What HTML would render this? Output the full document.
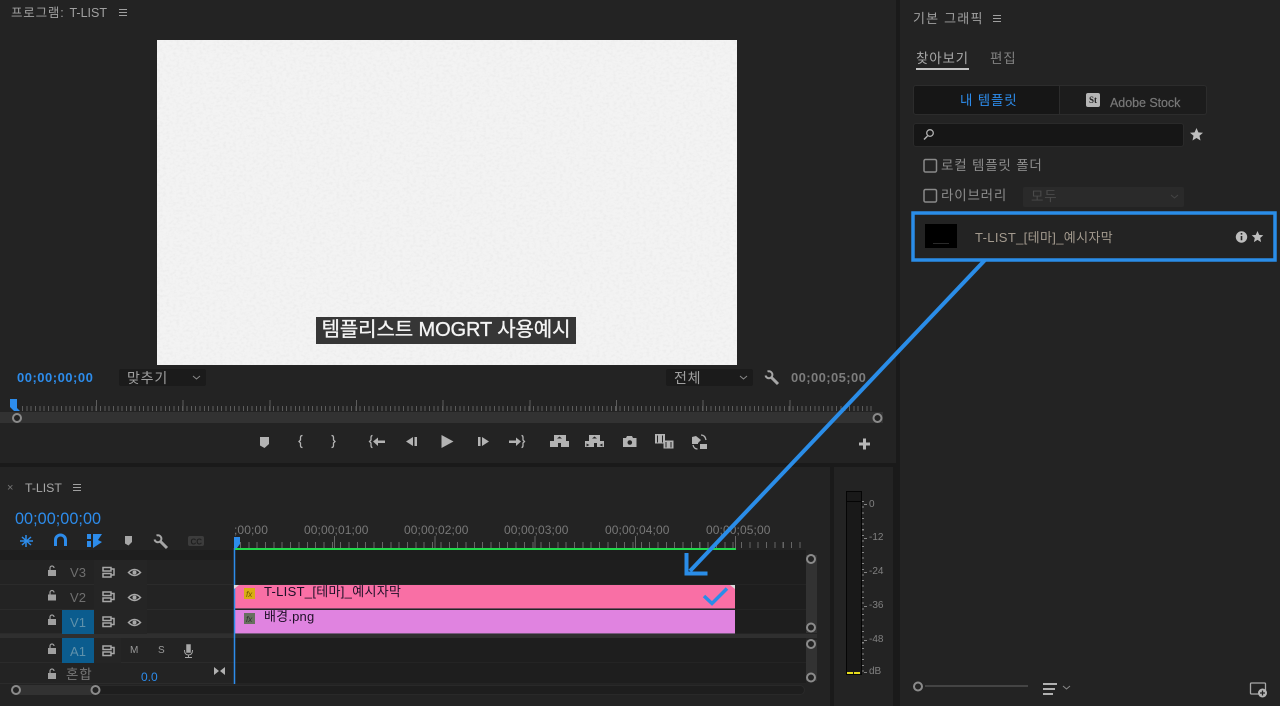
<!DOCTYPE html>
<html lang="ko"><head><meta charset="utf-8"><title>T-LIST</title>
<style>
*{box-sizing:border-box;margin:0;padding:0}
html,body{width:1280px;height:706px;overflow:hidden;background:#1a1a1a}
body{position:relative;font-family:"Liberation Sans","Noto Sans CJK KR",sans-serif;color:#a3a3a3;font-size:12px}
div{position:absolute}
.t{white-space:nowrap;line-height:16px}
.b{color:#2d8ceb}
.ko{letter-spacing:.8px;font-weight:400}
.tc{font-size:12px;color:#787878;letter-spacing:.1px}
.row{left:0;width:806px;border-bottom:1px solid #2b2b2b;background:#232323}
.lab{width:32px;text-align:center;color:#6f6f6f;font-size:13px;line-height:24px}
svg{position:absolute;left:0;top:0}
</style></head><body>
<div style="left:0;top:0;width:896px;height:463px;background:#232323"></div>
<div style="left:0;top:467px;width:830px;height:239px;background:#232323"></div>
<div style="left:834px;top:467px;width:59px;height:239px;background:#232323"></div>
<div style="left:900px;top:0;width:380px;height:706px;background:#232323"></div>

<!-- program monitor -->
<div class="t ko" style="left:11px;top:5px;font-size:12.500px;color:#a0a0a0">프로그램:<span style="letter-spacing:0;margin-left:5px">T-LIST</span></div>
<div style="left:157px;top:40px;width:580px;height:325px;background:#f3f3f3"></div>
<svg width="1280" height="706" style="left:0;top:0"><defs><filter id="p" x="0" y="0" width="100%" height="100%"><feTurbulence type="fractalNoise" baseFrequency=".3 .4" numOctaves="3" seed="4"/><feColorMatrix values="0 0 0 0 .5 0 0 0 0 .5 0 0 0 0 .5 .7 0 0 0 -.3"/></filter></defs><rect x="157" y="40" width="580" height="325" filter="url(#p)" opacity=".42"/></svg>
<div class="t" style="left:316px;top:317px;width:260px;height:27px;background:#363636;color:#f4f4f4;font-size:20px;line-height:26px;text-align:center;white-space:nowrap;letter-spacing:-.1px;-webkit-text-stroke:.35px #f4f4f4">템플리스트 MOGRT 사용예시</div>
<div class="t b" style="left:17px;top:370px;font-size:13px;font-weight:700;letter-spacing:.5px">00;00;00;00</div>
<div style="left:119px;top:369px;width:87px;height:17px;background:#1b1b1b;border-radius:2px"></div>
<div class="t ko" style="left:127px;top:370px;font-size:14px;color:#a0a0a0">맞추기</div>
<div style="left:666px;top:369px;width:87px;height:17px;background:#1b1b1b;border-radius:2px"></div>
<div class="t ko" style="left:674px;top:370px;font-size:14px;color:#a0a0a0">전체</div>
<div class="t" style="left:791px;top:370px;font-size:13px;font-weight:700;color:#7d7d7d;letter-spacing:.4px">00;00;05;00</div>
<div style="left:0;top:412px;width:883px;height:11px;background:#323232"></div>
<div style="left:22px;top:406px;width:850px;height:5px;background:repeating-linear-gradient(90deg,#5c5c5c 0 1px,transparent 1px 4.330px)"></div>
<div style="left:96px;top:400px;width:780px;height:11px;background:repeating-linear-gradient(90deg,#5c5c5c 0 1px,transparent 1px 86.670px)"></div>

<!-- timeline -->
<div class="t" style="left:7px;top:480px;font-size:11px;color:#777">×</div>
<div class="t" style="left:25px;top:480px;font-size:12.300px;color:#a8a8a8">T-LIST</div>
<div class="t b" style="left:15px;top:511px;font-size:16.200px;letter-spacing:.05px">00;00;00;00</div>
<div style="left:0;top:550px;width:233px;height:10px;background:#1e1e1e"></div>
<div style="left:234px;top:550px;width:572px;height:10px;background:#1d1d1d"></div>
<div class="row" style="top:560px;height:25px"></div>
<div class="row" style="top:585px;height:25px"></div>
<div class="row" style="top:610px;height:24px"></div>
<div style="left:0;top:634px;width:817px;height:4px;background:#2f2f2f"></div>
<div class="row" style="top:638px;height:25px"></div>
<div class="row" style="top:663px;height:21px"></div>
<div style="left:234px;top:560px;width:572px;height:124px;background:rgba(20,20,20,.3)"></div>
<div style="left:234px;top:634px;width:583px;height:4px;background:#2f2f2f"></div>
<div style="left:94px;top:560px;width:53px;height:74px;background:#252525"></div>
<div style="left:62px;top:610px;width:32px;height:24px;background:#0b5c8e"></div>
<div style="left:62px;top:638px;width:32px;height:25px;background:#0b5c8e"></div>
<div style="left:94px;top:638px;width:27px;height:25px;background:#252525"></div>
<div class="lab" style="left:62px;top:561px">V3</div>
<div class="lab" style="left:62px;top:586px">V2</div>
<div class="lab" style="left:62px;top:611px;color:#5f91ab">V1</div>
<div class="lab" style="left:62px;top:640px;color:#5f91ab">A1</div>
<div class="t ko" style="left:66px;top:667px;color:#787878;font-size:13.500px">혼합</div>
<div class="t b" style="left:141px;top:669px;font-size:12px">0.0</div>
<div class="t" style="left:130px;top:643px;font-size:10px;color:#9a9a9a">M</div>
<div class="t" style="left:158px;top:643px;font-size:10px;color:#9a9a9a">S</div>

<!-- ruler -->
<div class="t tc" style="left:234px;top:522px">;00;00</div>
<div class="t tc" style="left:304px;top:522px">00;00;01;00</div>
<div class="t tc" style="left:404px;top:522px">00;00;02;00</div>
<div class="t tc" style="left:504px;top:522px">00;00;03;00</div>
<div class="t tc" style="left:605px;top:522px">00;00;04;00</div>
<div class="t tc" style="left:706px;top:522px">00;00;05;00</div>
<div style="left:240px;top:542px;width:565px;height:6px;background:repeating-linear-gradient(90deg,#666 0 1px,transparent 1px 8.350px)"></div>
<div style="left:334px;top:536px;width:420px;height:12px;background:repeating-linear-gradient(90deg,#666 0 1px,transparent 1px 100.300px)"></div>
<div style="left:234px;top:548px;width:502px;height:2px;background:#22d84c"></div>

<!-- clips -->
<div style="left:234px;top:585px;width:501px;height:24px;background:#f96fa5;border-bottom:1px solid #7a4a66"></div>
<div style="left:234px;top:610px;width:501px;height:24px;background:#e083e0;border-bottom:1px solid #7a5a80"></div>
<div class="t" style="left:264px;top:584px;font-size:13px;color:#1f1028;letter-spacing:.3px">T-LIST_[테마]_예시자막</div>
<div class="t" style="left:264px;top:609px;font-size:13px;color:#1f1028;letter-spacing:.2px">배경.png</div>
<div style="left:244px;top:588px;width:11px;height:11px;background:#d9ae14"></div>
<div class="t" style="left:246px;top:587px;font-size:8px;font-style:italic;color:#6d5200">fx</div>
<div style="left:244px;top:613px;width:11px;height:11px;background:#67705f"></div>
<div class="t" style="left:246px;top:612px;font-size:8px;font-style:italic;color:#2d2d2d">fx</div>

<!-- scrollbars -->
<div style="left:806px;top:555px;width:11px;height:78px;background:#323232"></div>
<div style="left:806px;top:640px;width:11px;height:41px;background:#323232"></div>
<div style="left:11px;top:685px;width:85px;height:10px;background:#323232;border-radius:5px"></div>
<div style="left:96px;top:685px;width:709px;height:10px;background:#1e1e1e;border:1px solid #292929;border-radius:5px"></div>

<!-- meter -->
<div style="left:846px;top:491px;width:16px;height:184px;background:#191919;border:1px solid #050505"></div>
<div style="left:847px;top:491px;width:14px;height:11px;border-bottom:1px solid #050505"></div>
<div style="left:847px;top:672px;width:6px;height:1.500px;background:#e6dc1c"></div>
<div style="left:854px;top:672px;width:6px;height:1.500px;background:#e6dc1c"></div>
<div style="left:862px;top:501px;width:2px;height:172px;background:repeating-linear-gradient(180deg,#858585 0 1px,transparent 1px 5.650px)"></div>
<div class="t" style="left:869px;top:497px;font-size:10px;color:#808080">0</div>
<div class="t" style="left:869px;top:530px;font-size:10px;color:#808080">-12</div>
<div class="t" style="left:869px;top:564px;font-size:10px;color:#808080">-24</div>
<div class="t" style="left:869px;top:598px;font-size:10px;color:#808080">-36</div>
<div class="t" style="left:869px;top:632px;font-size:10px;color:#808080">-48</div>
<div class="t" style="left:869px;top:664px;font-size:10px;color:#808080">dB</div>

<!-- right panel -->
<div class="t ko" style="left:913px;top:11px;font-size:13px;color:#a0a0a0;letter-spacing:1.200px">기본 그래픽</div>
<div class="t ko" style="left:916px;top:51px;font-size:13.500px;color:#a8a8a8">찾아보기</div>
<div style="left:916px;top:68px;width:53px;height:2px;background:#c4c4c4"></div>
<div class="t ko" style="left:990px;top:51px;font-size:13.500px;color:#808080">편집</div>
<div style="left:913px;top:85px;width:147px;height:30px;background:#161616;border:1px solid #2c2c2c;border-radius:3px 0 0 3px"></div>
<div style="left:1060px;top:85px;width:147px;height:30px;background:#1c1c1c;border:1px solid #2c2c2c;border-left:0;border-radius:0 3px 3px 0"></div>
<div class="t b ko" style="left:960px;top:93px;font-size:13.500px">내 템플릿</div>
<div class="t" style="left:1086px;top:93px;width:14px;height:14px;background:#b5b5b5;color:#222;font:700 9px/14px 'Liberation Serif',serif;text-align:center;border-radius:2px">St</div>
<div class="t" style="left:1110px;top:95px;font-size:12.500px;color:#787878;letter-spacing:-.05px;-webkit-text-stroke:.2px #787878">Adobe Stock</div>
<div style="left:913px;top:123px;width:271px;height:24px;background:#161616;border:1px solid #2a2a2a;border-radius:3px"></div>
<div class="t ko" style="left:941px;top:158px;font-size:13.500px;color:#8c8c8c">로컬 템플릿 폴더</div>
<div class="t ko" style="left:941px;top:188px;font-size:13.500px;color:#8c8c8c">라이브러리</div>
<div style="left:1023px;top:187px;width:161px;height:20px;background:#2a2a2a;border-radius:2px"></div>
<div class="t ko" style="left:1031px;top:189px;font-size:13.500px;color:#4a4a4a">모두</div>
<div style="left:925px;top:224px;width:32px;height:24px;background:#000"></div>
<div style="left:933px;top:243px;width:16px;height:1px;background:#2a2a2a"></div>
<div class="t" style="left:975px;top:230px;font-size:13px;color:#a39a8e;letter-spacing:.35px">T-LIST_[테마]_예시자막</div>

<svg width="1280" height="706" viewBox="0 0 1280 706">
<!-- hamburgers -->
<g stroke="#a0a0a0" stroke-width="1"><path d="M119 9.500h8M119 12.500h8M119 15.500h8M73 484.500h8M73 487.500h8M73 490.500h8M993 15.500h8M993 18.500h8M993 21.500h8"/></g>
<!-- dropdown chevrons -->
<g fill="none" stroke="#8a8a8a" stroke-width="1"><path d="M193 376l3.500 3 3.500-3M740 376l3.500 3 3.500-3M1063 686l3.500 3 3.500-3"/><path stroke="#444" d="M1171 195l3.500 3 3.500-3"/></g>
<!-- wrenches -->
<g fill="none" stroke="#a6a6a6">
<path d="M771 377l7 7" stroke-width="3"/>
<path d="M767.500 371.500A3.500 3.500 0 1 1 765.500 375.500" stroke-width="2"/>
<path d="M160 541l7 7" stroke-width="3"/>
<path d="M156.500 535.500A3.500 3.500 0 1 1 154.500 539.500" stroke-width="2"/>
</g>
<!-- playhead monitor -->
<path d="M10 399h7v9l3 3h-6l-4-4z" fill="#2d8ceb"/>
<g fill="#232323" stroke="#8b8b8b" stroke-width="2"><circle cx="17" cy="418" r="4"/><circle cx="877.500" cy="418" r="4"/><circle cx="811" cy="559" r="4"/><circle cx="811" cy="627.500" r="4"/><circle cx="811" cy="644" r="4"/><circle cx="811" cy="677.500" r="4"/><circle cx="16" cy="690" r="4"/><circle cx="95.500" cy="690" r="4"/><circle cx="918" cy="686.500" r="4"/></g>
<!-- transport -->
<g fill="#b3b3b3" stroke="none">
<path d="M260 437h9v7l-4.500 4-4.500-2.500z"/>
<path d="M441.500 435l12 6.500-12 6.500z"/>
<path d="M406 441.500l7-4.500v9zM414.500 437h2.500v9h-2.500zM478 437h2.500v9H478zM482 437l7 4.500-7 4.500z"/>
<path d="M373 441.500l5-4v3h7v2.500h-7v3zM521 441.500l-5-4v3h-7v2.500h7v3z"/>
<path d="M550 441h4v-6h12v6h3v6h-8v-4h-3v4h-8z" fill-rule="evenodd"/>
<path d="M585 441h4v-6h11v6h4v6h-7v-4h-3v4h-9z"/>
<path d="M623 438h3l1-2h5l1 2h3.500v9H623z"/>
<path d="M655 434h10v9.500h-10zM663.500 440.500h10v8h-10z"/>
<path d="M692 437l4-1 5 4-3 3v1h-6zM700 444h7v5h-7z"/>
</g>
<path d="M557 438.500l2.500-2 2.500 2zM592 438.500l2.500-2 2.500 2z" fill="#232323"/>
<path d="M586.500 443.500l3 1.500-3 1.500zM602.500 443.500l-3 1.500 3 1.500z" fill="#232323"/>
<circle cx="629.800" cy="442.500" r="2.300" fill="#232323"/>
<path d="M657.500 435.500v7M662.500 435.500v7M666 442v5.500M671 442v5.500" stroke="#232323" stroke-width="1"/>
<g fill="none" stroke="#b3b3b3" stroke-width="1.300">
<path d="M302.500 435.500q-2 0-2 2v2.500l-1.500 1.500 1.500 1.500v2.500q0 2 2 2M331.500 435.500q2 0 2 2v2.500l1.500 1.500-1.500 1.500v2.500q0 2-2 2M372.500 435.500q-1.500 0-1.500 2v2.500l-1.500 1.500 1.500 1.500v2.500q0 2 1.500 2M521.500 435.500q1.500 0 1.500 2v2.500l1.500 1.500-1.500 1.500v2.500q0 2-1.500 2"/>
<path d="M693 445q1 4 4.500 4M701 435q4 0 5 5"/>
</g>
<path d="M864.500 438.500v11M859 444h11" stroke="#b8b8b8" stroke-width="3"/>
<!-- timeline tool icons -->
<g stroke="#2d8ceb" fill="none" stroke-width="1.500">
<path d="M26 535v12M20 541h13M22 537l9 8M31 537l-9 8"/>
<path d="M55.500 547v-6a5 5 0 0 1 10 0v6" stroke-width="3" transform="translate(0 -1)"/>
</g>
<path d="M87 534h4v5h-4zM87 541h4v6h-4zM93 534h9l-4 6 4 2-9 6z" fill="#2d8ceb"/>
<path d="M125 536h7v6l-3.500 3.500-3.500-2z" fill="#a6a6a6"/>
<rect x="188" y="536" width="16" height="10" rx="2" fill="#3c3c3c"/>
<text x="190.500" y="544.500" font-size="8" font-weight="700" fill="#1f1f1f" font-family="Liberation Sans">CC</text>
<!-- playhead timeline -->
<path d="M234 537h6v7l-3 4h-3z" fill="#2d8ceb"/>
<path d="M234.500 548v136" stroke="#2d8ceb" stroke-width="1.500"/>
<path d="M234 585h5l-5 4zM735 585h-5l5 4z" fill="#dcdcdc"/>
<!-- meter dashes -->
<path d="M864 504.500h3M864 538.500h3M864 572.500h3M864 606.500h3M864 640.500h3M864 672.500h3" stroke="#858585"/>
<!-- track icons -->
<g fill="none" stroke="#a8a8a8" stroke-width="1.500">
<path d="M103 567.500h8v3.500h-8zM103 573.500h8v3.500h-8zM111 569h3v6h-3"/>
<path d="M103 592h8v3.500h-8zM103 598h8v3.500h-8zM111 593.500h3v6h-3M103 617h8v3.500h-8zM103 623h8v3.500h-8zM111 618.500h3v6h-3M103 646h8v3.500h-8zM103 652h8v3.500h-8zM111 647.500h3v6h-3"/>
<path d="M128.500 572.500q6-6 12 0-6 6-12 0zM128.500 597.500q6-6 12 0-6 6-12 0zM128.500 622.500q6-6 12 0-6 6-12 0z"/>
</g>
<g fill="#a8a8a8"><circle cx="134.500" cy="572.500" r="2"/><circle cx="134.500" cy="597.500" r="2"/><circle cx="134.500" cy="622.500" r="2"/></g>
<g fill="#a0a0a0"><path d="M48 570h8v6h-8zM48 594.500h8v6h-8zM48 619h8v6h-8zM48 648h8v6h-8zM48 673h8v6h-8z"/></g>
<g fill="none" stroke="#a0a0a0" stroke-width="1.200"><path d="M50 570v-2a2 2 0 0 1 4 0M50 594.500v-2a2 2 0 0 1 4 0M50 619v-2a2 2 0 0 1 4 0M50 648v-2a2 2 0 0 1 4 0M50 673v-2a2 2 0 0 1 4 0"/></g>
<path d="M187 645h3v7h-3z" fill="#a8a8a8" stroke="#a8a8a8" stroke-width="1.500"/>
<path d="M184.500 650q0 5 4 5t4-5M188.500 655v2M185 657.500h7" fill="none" stroke="#a8a8a8"/>
<path d="M214 667l5 4-5 4zM225 667l-5 4 5 4z" fill="#b0b0b0"/>
<!-- right panel icons -->
<circle cx="930" cy="133" r="3.300" fill="none" stroke="#b0b0b0" stroke-width="1.300"/><path d="M927.500 136l-3.500 3.500" stroke="#b0b0b0" stroke-width="1.500"/>
<path d="M1196.500 128l1.900 4.400 4.600.4-3.500 3 1 4.700-4-2.500-4 2.500 1-4.700-3.500-3 4.600-.4z" fill="#bdbdbd"/>
<path d="M1257.500 231l1.700 3.900 4.100.4-3.100 2.700.9 4.100-3.600-2.200-3.600 2.200.9-4.100-3.100-2.700 4.100-.4z" fill="#bdbdbd"/>
<circle cx="1241.500" cy="237" r="5.700" fill="#bdbdbd"/>
<path d="M1241.500 233v1.600M1241.500 236v4.300" stroke="#232323" stroke-width="1.600"/>
<rect x="924" y="159.500" width="12.500" height="12.500" rx="1.500" fill="none" stroke="#8a8a8a" stroke-width="1.500"/>
<rect x="924" y="189.500" width="12.500" height="12.500" rx="1.500" fill="none" stroke="#8a8a8a" stroke-width="1.500"/>
<!-- bottom of right panel -->
<path d="M925 686h103" stroke="#444" stroke-width="2"/>
<path d="M1043 684h14M1043 689h12M1043 694h10" stroke="#b0b0b0" stroke-width="2"/>
<rect x="1250.500" y="683" width="15" height="11" rx="1" fill="none" stroke="#a8a8a8" stroke-width="1.300"/>
<circle cx="1262.500" cy="693" r="4.500" fill="#b5b5b5"/>
<path d="M1262.500 690.500v5M1260 693h5" stroke="#232323" stroke-width="1.300"/>
<!-- blue annotations -->
<g fill="none" stroke="#2a8de8">
<rect x="913" y="213" width="362" height="47" stroke-width="3.500"/>
<path d="M985 260L690 571" stroke-width="4"/>
<path d="M686.500 553v20.500H707.500" stroke-width="4"/>
<path d="M704 596l8 7.500 15-15" stroke-width="3.500"/>
</g>
</svg>
</body></html>
